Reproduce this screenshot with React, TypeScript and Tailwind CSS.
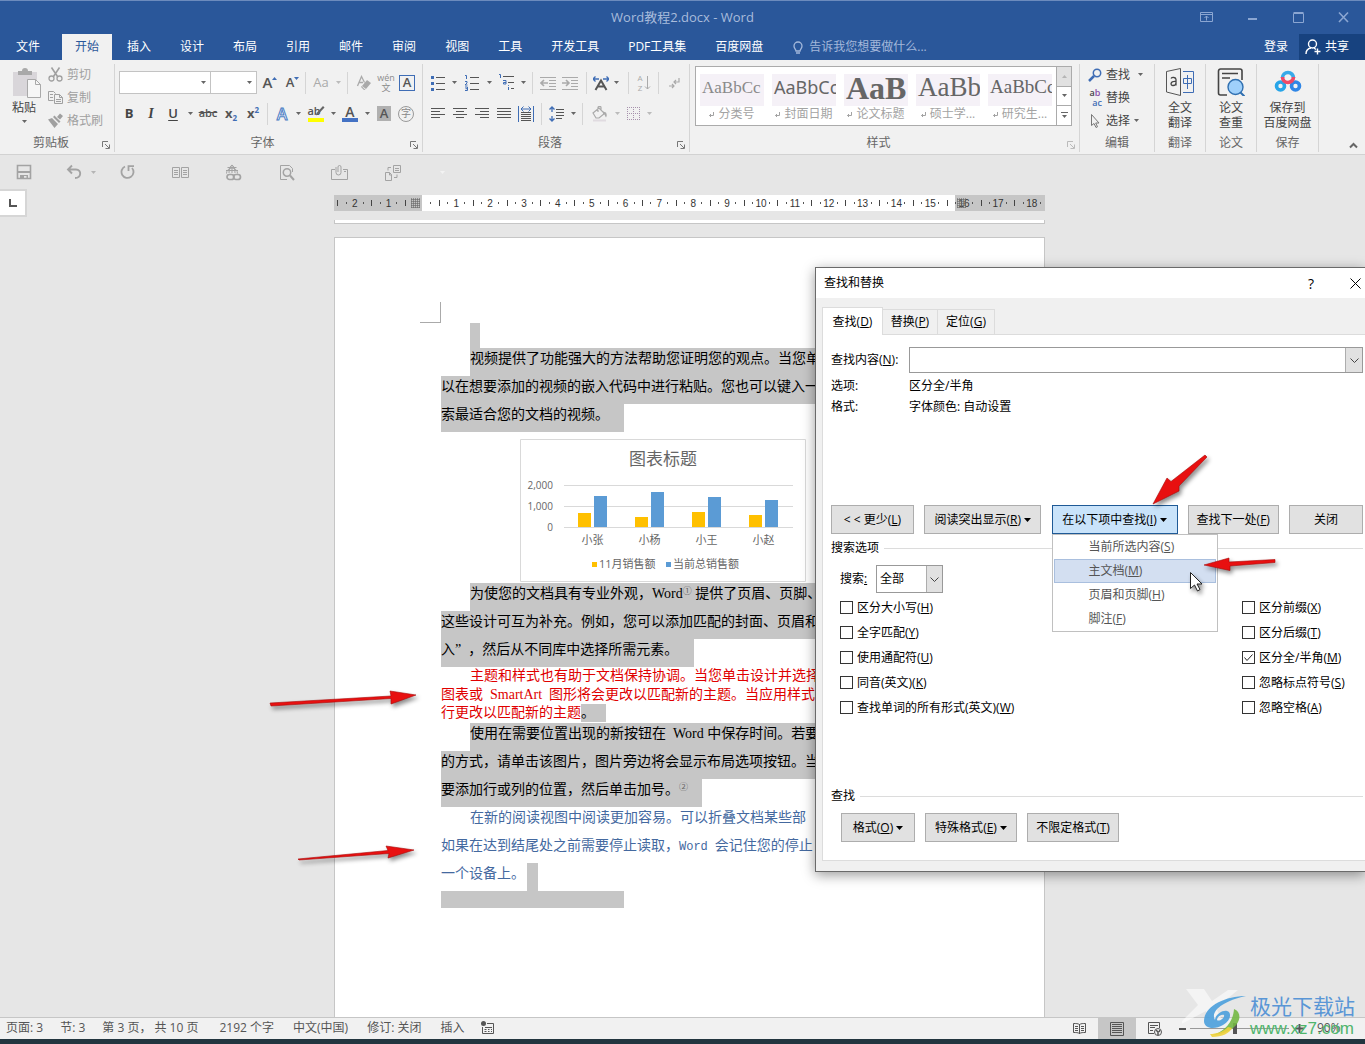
import type { ReactNode } from "react";

const tabs = ["插入", "设计", "布局", "引用", "邮件", "审阅", "视图", "工具", "开发工具", "PDF工具集", "百度网盘"];

const styles = [
  { name: "分类号", sample: "AaBbCc", look: "font-['Liberation_Serif',serif] text-[17px] text-[#8a8a8a]" },
  { name: "封面日期", sample: "AaBbCc", look: "font-['Noto_Sans',sans-serif] text-[18px] text-[#666]" },
  { name: "论文标题", sample: "AaB", look: "font-['Liberation_Serif',serif] text-[32px] font-bold text-[#666]" },
  { name: "硕士学...", sample: "AaBb", look: "font-['Liberation_Serif',serif] text-[27px] text-[#666]" },
  { name: "研究生...", sample: "AaBbCc", look: "font-['Liberation_Serif',serif] text-[19px] text-[#666]" },
];

const rulerMarks = Array.from({ length: 21 }, (_, i) => i - 2);

const chartData = [
  { name: "小张", month: 14, total: 31 },
  { name: "小杨", month: 10, total: 35 },
  { name: "小王", month: 15, total: 30 },
  { name: "小赵", month: 12, total: 27 },
];

const leftOptions = [
  { label: "区分大小写", hotkey: "H" },
  { label: "全字匹配", hotkey: "Y" },
  { label: "使用通配符", hotkey: "U" },
  { label: "同音(英文)", hotkey: "K" },
  { label: "查找单词的所有形式(英文)", hotkey: "W" },
];

const rightOptions = [
  { label: "区分前缀", hotkey: "X" },
  { label: "区分后缀", hotkey: "T" },
  { label: "区分全/半角", hotkey: "M", checked: true },
  { label: "忽略标点符号", hotkey: "S" },
  { label: "忽略空格", hotkey: "A" },
];

const scopeItems = [
  { label: "当前所选内容", hotkey: "S" },
  { label: "主文档", hotkey: "M", active: true },
  { label: "页眉和页脚", hotkey: "H" },
  { label: "脚注", hotkey: "F" },
];

/* ---------- small shared parts ---------- */

function Icon({ size = 16, className = "", children }: { size?: number; className?: string; children: ReactNode }) {
  return (
    <svg width={size} height={size} viewBox={`0 0 ${size} ${size}`} fill="none" stroke="currentColor" className={`shrink-0 ${className}`} aria-hidden="true">
      {children}
    </svg>
  );
}

function Caret({ className = "text-[#666]" }: { className?: string }) {
  return (
    <svg width="5" height="3" viewBox="0 0 5 3" className={`shrink-0 ${className}`} aria-hidden="true">
      <path d="M0 0h5L2.5 3z" fill="currentColor" />
    </svg>
  );
}

function Tool({ w, label, className = "text-[#555]", children }: { w: string; label: string; className?: string; children: ReactNode }) {
  return (
    <button aria-label={label} className={`flex h-full shrink-0 items-center justify-center ${w} ${className}`}>
      {children}
    </button>
  );
}

function Sep({ w }: { w: string }) {
  return (
    <span className={`flex shrink-0 justify-center ${w}`}>
      <span className="h-[22px] w-px bg-[#d5d5d5]" />
    </span>
  );
}

function Key({ k }: { k: string }) {
  return (
    <>
      (<u className="underline-offset-1">{k}</u>)
    </>
  );
}

function Group({ label, w, launcher, dim, children }: { label: string; w: string; launcher?: boolean; dim?: boolean; children: ReactNode }) {
  return (
    <section className={`flex h-[88px] flex-col border-r border-[#d5d5d5] ${w}`}>
      <div className="h-[70px]">{children}</div>
      <div className="flex h-[18px] items-center text-[#666]">
        <span className="flex-1 text-center">{label}</span>
        {launcher ? (
          <button aria-label={`${label}设置`} className={`flex w-3 items-end pt-1 ${dim ? "text-[#bbb]" : "text-[#777]"}`}>
            <Icon size={8}>
              <path d="M.5 6V.5H6M3 3l4 4M7.5 3.5v4h-4" />
            </Icon>
          </button>
        ) : null}
      </div>
    </section>
  );
}

/* ---------- title bar and tabs ---------- */

function TitleBar() {
  return (
    <header className="h-[60px] shrink-0 border-t border-[#6c8bbd] bg-[#2a579a] text-white">
      <div className="grid h-[33px] grid-cols-[1fr_auto_1fr] items-center text-[#a9bcdc]">
        <span />
        <h1 className="text-[13px]">Word教程2.docx - Word</h1>
        <div className="flex justify-end text-[#8ba6d2]">
          <button aria-label="功能区显示选项" className="flex w-[46px] justify-center">
            <Icon size={13}>
              <path d="M.5 1.5h12v9H.5zM.5 3.500h12M6.500 9.500V5M4.500 7l2-2 2 2" />
            </Icon>
          </button>
          <button aria-label="最小化" className="flex w-[46px] justify-center">
            <Icon size={13}>
              <path d="M2 8h9" strokeWidth="2" />
            </Icon>
          </button>
          <button aria-label="最大化" className="flex w-[46px] justify-center">
            <Icon size={13}>
              <path d="M1.500 2.500h10v9h-10zM1.500 1.500h10" />
            </Icon>
          </button>
          <button aria-label="关闭窗口" className="flex w-11 justify-center">
            <Icon size={13}>
              <path d="M2 1.500l9 9.500M11 1.500l-9 9.500" strokeWidth="1.600" />
            </Icon>
          </button>
        </div>
      </div>
      <nav className="flex h-[26px] items-stretch gap-px whitespace-nowrap">
        <button className="mr-[5px] px-4">文件</button>
        <button className="bg-[#f1f1f1] px-[13px] text-[#2a579a]">开始</button>
        {tabs.map((tab) => (
          <button key={tab} className="px-[14px]">
            {tab}
          </button>
        ))}
        <button className="ml-[14px] flex items-center gap-[5px] text-[#a3b8db]">
          <Icon size={12} className="h-[15px]">
            <path d="M4 9.500C4 8 2 7 2 4.500a4 4 0 018 0C10 7 8 8 8 9.500zM4 11.500h4" strokeWidth="1.300" />
          </Icon>
          告诉我您想要做什么...
        </button>
        <button className="ml-auto px-[10px]">登录</button>
        <button className="flex w-[66px] items-center gap-1 bg-[#17427f] pl-[6px]">
          <Icon size={16}>
            <circle cx="7.500" cy="5" r="4" strokeWidth="1.400" />
            <path d="M1 15c0-3 2-5.500 5-6M9 9l2 1.500M12.500 9.500v6M9.500 12.500h6" strokeWidth="1.400" />
          </Icon>
          共享
        </button>
      </nav>
    </header>
  );
}

/* ---------- ribbon ---------- */

function ClipboardGroup() {
  return (
    <Group label="剪贴板" w="w-[115px]" launcher>
      <div className="flex">
        <button className="flex w-12 flex-col items-center pt-1 text-[#444]">
          <svg width="30" height="32" viewBox="0 0 30 32" className="ml-1" aria-hidden="true">
            <path d="M2 4h24v24H2z" fill="#d9d6da" />
            <path d="M7 7V3h4a3 3 0 016 0h4v4z" fill="#a9a9a9" />
            <path d="M16.500 11.500h8l5 5v13h-13z" fill="#f6f6f6" stroke="#a9a9a9" />
            <path d="M24.500 11.500v5h5" fill="none" stroke="#a9a9a9" />
          </svg>
          <span className="leading-4">粘贴</span>
          <Caret className="mt-1 text-[#666]" />
        </button>
        <div className="-mt-px flex flex-col text-[#a0a0a0]">
          <button className="flex h-[23px] items-center gap-1">
            <Icon size={15}>
              <path d="M3.500 0.500l6 9M11.500 0.500l-6 9" strokeWidth="1.600" />
              <circle cx="3.500" cy="11.500" r="2.500" strokeWidth="1.300" />
              <circle cx="11.500" cy="11.500" r="2.500" strokeWidth="1.300" />
            </Icon>
            剪切
          </button>
          <button className="flex h-[23px] items-center gap-1">
            <Icon size={15}>
              <path d="M5.500 10.500h-5v-9h5l2 2M6.500 4.500h5l3 3v6h-8zM11.500 4.500v3h3M2 4.500h3M2 7.500h3M8 9.500h5M8 11.500h5" />
            </Icon>
            复制
          </button>
          <button className="flex h-[23px] items-center gap-1">
            <Icon size={15}>
              <path d="M9 4l3-3.500 3 2.500-3 3.500zM6.500 2.500l6 6-1.500 1.500-6-6zM0 6.500l4-1.500 6 6-3.500 4z" fill="currentColor" stroke="none" />
            </Icon>
            格式刷
          </button>
        </div>
      </div>
    </Group>
  );
}

function FontGroup() {
  return (
    <Group label="字体" w="w-[308px]" launcher>
      <div className="flex h-[30px] items-center pt-[7px] pl-1">
        {[
          { label: "字体名称", w: "w-[92px]" },
          { label: "字号", w: "-ml-px w-[47px]" },
        ].map((box) => (
          <div key={box.label} className={`relative h-[23px] shrink-0 border border-[#c3c3c3] bg-white ${box.w}`}>
            <select aria-label={box.label} className="h-full w-full appearance-none" />
            <Caret className="pointer-events-none absolute top-[9px] right-1 text-[#666]" />
          </div>
        ))}
        <Tool w="w-[26px]" label="增大字号">
          <span className="text-[15px] font-semibold">A</span>
          <Caret className="mb-2 rotate-180 text-[#3f6db5]" />
        </Tool>
        <Tool w="w-[19px]" label="减小字号">
          <span className="text-[13px] font-semibold">A</span>
          <Caret className="mb-2 text-[#3f6db5]" />
        </Tool>
        <Sep w="w-[6px]" />
        <Tool w="w-[26px]" label="更改大小写" className="text-[13px] text-[#aaa]">
          Aa
        </Tool>
        <Tool w="w-2" label="大小写菜单" className="text-[#bbb]">
          <Caret className="text-[#bbb]" />
        </Tool>
        <Sep w="w-[10px]" />
        <Tool w="w-6" label="清除格式" className="text-[#aaa]">
          <Icon>
            <path d="M1.500 11L5.500 1.500l3 6M3 7.500h4" strokeWidth="1.300" />
            <path d="M6 11l5-6 4 3-5 6zM5 12l3 3h1.500L5.500 11z" fill="currentColor" stroke="none" />
          </Icon>
        </Tool>
        <Tool w="w-5" label="拼音指南" className="flex-col text-[9px] leading-[10px] text-[#8c8c8c]">
          <span>wén</span>
          <span>文</span>
        </Tool>
        <Tool w="w-[22px]" label="字符边框">
          <span className="flex h-4 w-4 items-center justify-center border border-[#3f6db5] text-[13px] font-semibold">A</span>
        </Tool>
      </div>
      <div className="mt-2 flex h-[23px] items-center pl-[3px]">
        <Tool w="w-[22px]" label="加粗" className="text-[13px] font-bold text-[#444]">
          B
        </Tool>
        <Tool w="w-[22px]" label="倾斜" className="font-['Liberation_Serif',serif] text-[14px] font-bold text-[#444] italic">
          I
        </Tool>
        <Tool w="w-[22px]" label="下划线" className="text-[13px] font-semibold text-[#444] underline underline-offset-2">
          U
        </Tool>
        <Tool w="w-3" label="下划线菜单">
          <Caret />
        </Tool>
        <Tool w="w-6" label="删除线" className="text-[11px] font-semibold text-[#555] line-through">
          abc
        </Tool>
        <Tool w="w-[22px]" label="下标" className="text-[13px] font-bold text-[#555]">
          x<span className="mt-2 text-[8px] text-[#3f6db5]">2</span>
        </Tool>
        <Tool w="w-[22px]" label="上标" className="text-[13px] font-bold text-[#555]">
          x<span className="mb-2 text-[8px] text-[#3f6db5]">2</span>
        </Tool>
        <Sep w="w-[7px]" />
        <Tool w="w-[22px]" label="文本效果" className="text-[16px] font-semibold text-white [-webkit-text-stroke:1px_#4a7cc4]">
          A
        </Tool>
        <Tool w="w-[10px]" label="文本效果菜单">
          <Caret />
        </Tool>
        <Tool w="w-[26px]" label="突出显示" className="flex-col text-[11px] leading-[10px] font-semibold text-[#555]">
          <span className="relative pr-1">
            ab
            <Icon size={14} className="absolute -top-px left-1">
              <path d="M5 10.500l1-3L12 1l1.500 1.500-6 6.500z" fill="#666" stroke="none" />
            </Icon>
          </span>
          <span className="mt-[2px] h-1 w-4 bg-[#ff0]" />
        </Tool>
        <Tool w="w-2" label="突出显示菜单">
          <Caret />
        </Tool>
        <Tool w="w-[26px]" label="字体颜色" className="flex-col text-[14px] leading-[11px] font-semibold text-[#555]">
          <span>A</span>
          <span className="mt-px h-1 w-4 bg-[#4472c4]" />
        </Tool>
        <Tool w="w-2" label="字体颜色菜单">
          <Caret />
        </Tool>
        <Tool w="w-[26px]" label="字符底纹">
          <span className="flex h-[15px] w-[14px] items-center justify-center bg-[#b0b0b0] text-[13px] font-semibold">A</span>
        </Tool>
        <Tool w="w-[18px]" label="带圈字符" className="text-[#888]">
          <span className="flex h-4 w-4 items-center justify-center rounded-full border border-[#999] text-[10px]">字</span>
        </Tool>
      </div>
    </Group>
  );
}

function ParagraphGroup() {
  return (
    <Group label="段落" w="w-[267px]" launcher>
      <div className="flex h-[30px] items-center pt-[7px] pl-1">
        <Tool w="w-[22px]" label="项目符号">
          <Icon>
            <path d="M6 2.500h9M6 8.500h9M6 14.500h9" />
            <path d="M1 1h3v3H1zM1 7h3v3H1zM1 13h3v3H1z" fill="#3f6db5" stroke="none" />
          </Icon>
        </Tool>
        <Tool w="w-[10px]" label="项目符号菜单">
          <Caret />
        </Tool>
        <Tool w="w-[26px]" label="编号">
          <Icon>
            <path d="M6 2.500h9M6 8.500h9M6 14.500h9" />
            <path d="M1 .5h1.500V4M1 6.500h2v1.500l-2 2h2.500M1 12h2.500v3.500H1M1.500 13.700h2" stroke="#3f6db5" />
          </Icon>
        </Tool>
        <Tool w="w-2" label="编号菜单">
          <Caret />
        </Tool>
        <Tool w="w-[26px]" label="多级列表">
          <Icon size={17}>
            <path d="M5 2.500h11M10 8.500h6M13 14.500h3" />
            <path d="M1 .5h1.500V4M5 6.500h3v3.500H5.500V8.500H8M10.500 11v.8M10.500 13v3" stroke="#3f6db5" />
          </Icon>
        </Tool>
        <Tool w="w-2" label="多级列表菜单">
          <Caret />
        </Tool>
        <Sep w="w-[10px]" />
        <Tool w="w-[22px]" label="减少缩进" className="text-[#aaa]">
          <Icon>
            <path d="M0 2.500h16M9 5.500h7M9 8.500h7M9 11.500h7M0 14.500h16" />
            <path d="M1 8h7M4 5L1 8l3 3" strokeWidth="1.600" />
          </Icon>
        </Tool>
        <Tool w="w-[22px]" label="增加缩进" className="text-[#aaa]">
          <Icon>
            <path d="M0 2.500h16M9 5.500h7M9 8.500h7M9 11.500h7M0 14.500h16" />
            <path d="M0 8h7M4 5l3 3-3 3" strokeWidth="1.600" />
          </Icon>
        </Tool>
        <Sep w="w-[10px]" />
        <Tool w="w-5" label="中文版式">
          <Icon>
            <path d="M2.500 15L8 5.500l5.500 9.500M4.500 11.500h7" strokeWidth="2" />
            <path d="M0 4h6M2.500 1.500L0 4l2.500 2.500M10 4h6M13.500 1.500L16 4l-2.500 2.500" stroke="#3f6db5" strokeWidth="1.300" />
          </Icon>
        </Tool>
        <Tool w="w-[10px]" label="中文版式菜单">
          <Caret />
        </Tool>
        <Sep w="w-[14px]" />
        <Tool w="w-[18px]" label="排序" className="text-[#aaa]">
          <span className="flex flex-col text-[8px] leading-[10px]">
            <span>A</span>
            <span>Z</span>
          </span>
          <svg width="8" height="16" viewBox="0 0 8 16" fill="none" stroke="currentColor" aria-hidden="true">
            <path d="M4.500 1v13M2 11.500L4.500 14 7 11.500" />
          </svg>
        </Tool>
        <Sep w="w-[10px]" />
        <Tool w="w-[22px]" label="显示编辑标记" className="text-[#aaa]">
          <Icon size={12}>
            <path d="M11 1v4H6M8 3L6 5l2 2M1 9h5M4 7l2 2-2 2" strokeWidth="1.200" />
          </Icon>
        </Tool>
      </div>
      <div className="mt-2 flex h-[23px] items-center pl-1">
        <Tool w="w-[22px]" label="左对齐">
          <Icon size={14}>
            <path d="M0 1.500h14M0 4.500h9M0 7.500h14M0 10.500h9" />
          </Icon>
        </Tool>
        <Tool w="w-[22px]" label="居中">
          <Icon size={14}>
            <path d="M0 1.500h14M3 4.500h8M0 7.500h14M3 10.500h8" />
          </Icon>
        </Tool>
        <Tool w="w-[22px]" label="右对齐">
          <Icon size={14}>
            <path d="M0 1.500h14M5 4.500h9M0 7.500h14M5 10.500h9" />
          </Icon>
        </Tool>
        <Tool w="w-[22px]" label="两端对齐">
          <Icon size={14}>
            <path d="M0 1.500h14M0 4.500h14M0 7.500h14M0 10.500h14" />
          </Icon>
        </Tool>
        <Tool w="w-[22px]" label="分散对齐">
          <Icon>
            <path d="M3 6.500h10M3 8.500h10M3 10.500h10M3 12.500h10M3 14.500h10" />
            <path d="M.5 0v16M15.500 0v16M3 3h10M5.500 .5L3 3l2.500 2.500M10.500 .5L13 3l-2.500 2.500" stroke="#3f6db5" />
          </Icon>
        </Tool>
        <Sep w="w-2" />
        <Tool w="w-6" label="行距">
          <Icon>
            <path d="M7 3.500h8M7 6.500h8M7 9.500h8M7 12.500h6" />
            <path d="M3 1v5M.5 3.500L3 1l2.500 2.500M3 10v5M.5 12.500L3 15l2.500-2.500" stroke="#3f6db5" strokeWidth="1.300" />
          </Icon>
        </Tool>
        <Tool w="w-2" label="行距菜单">
          <Caret />
        </Tool>
        <Sep w="w-[10px]" />
        <Tool w="w-[26px]" label="底纹" className="text-[#aaa]">
          <Icon>
            <path d="M1 7l6-5 5.500 5.500-5.500 4.500H4zM6 6V1.500C6 0 9 0 9 1.500V4" strokeWidth="1.200" />
            <path d="M11 5.500l3 1c1 2 1 3.500 0 5-1-1.500-1-3-3-4z" fill="currentColor" stroke="none" />
            <path d="M1 14.500h13" stroke="#e0dbe0" strokeWidth="2" />
          </Icon>
        </Tool>
        <Tool w="w-2" label="底纹菜单">
          <Caret className="text-[#bbb]" />
        </Tool>
        <Tool w="w-6" label="边框" className="text-[#a792ad]">
          <Icon size={13}>
            <path d="M0 .5h13M0 6.500h13M0 12.500h13M.5 0v13M6.500 0v13M12.500 0v13" strokeDasharray="1 1" />
          </Icon>
        </Tool>
        <Tool w="w-2" label="边框菜单">
          <Caret className="text-[#bbb]" />
        </Tool>
      </div>
    </Group>
  );
}

function StylesGroup() {
  return (
    <Group label="样式" w="min-w-0 flex-1" launcher dim>
      <div className="mt-[2px] mr-[7px] ml-[5px] flex h-[60px] border border-[#ababab] bg-white">
        <div className="flex flex-1 gap-2 overflow-hidden pt-1 pl-1">
          {styles.map((style) => (
            <button key={style.name} className="w-16 shrink-0">
              <span className={`flex h-8 items-center overflow-hidden bg-[#f5f1f7] px-[2px] pb-[5px] ${style.look}`}>{style.sample}</span>
              <span className="flex h-4 items-center justify-center gap-1 whitespace-nowrap text-[#a3a3a3]">
                <Icon size={5}>
                  <path d="M4.500 0v3.500H.5M2 2L.5 3.500 2 5" />
                </Icon>
                {style.name}
              </span>
            </button>
          ))}
        </div>
        <div className="grid w-[15px] grid-rows-3 border-l border-[#ababab]">
          <button aria-label="上一行" className="flex items-center justify-center bg-[#e1e1e1]">
            <Caret className="rotate-180 text-[#b5b5b5]" />
          </button>
          <button aria-label="下一行" className="flex items-center justify-center border-y border-[#ababab]">
            <Caret />
          </button>
          <button aria-label="更多样式" className="flex flex-col items-center justify-center gap-[2px]">
            <span className="h-px w-[7px] bg-[#666]" />
            <Caret />
          </button>
        </div>
      </div>
    </Group>
  );
}

function EditGroup() {
  return (
    <Group label="编辑" w="w-[75px]">
      <div className="-mt-px flex flex-col pl-2 text-[#444]">
        <button className="flex h-[23px] items-center gap-1">
          <Icon size={14}>
            <circle cx="9" cy="5" r="3.700" stroke="#3f6db5" strokeWidth="1.500" />
            <path d="M6 8l-5 5" stroke="#3f6db5" strokeWidth="2.500" />
          </Icon>
          查找
          <Caret className="ml-1 text-[#666]" />
        </button>
        <button className="flex h-[23px] items-center gap-1">
          <span className="flex w-[14px] flex-col text-[9px] leading-[10px] font-semibold">
            <span>
              a<span className="text-[#8a4fa8]">b</span>
            </span>
            <span className="self-end text-[#3f6db5]">ac</span>
          </span>
          替换
        </button>
        <button className="flex h-[23px] items-center gap-1">
          <Icon size={14}>
            <path d="M3.500 .5v11l2.500-2 2 4 1.500-.7-1.800-3.800h3.300z" stroke="#777" />
          </Icon>
          选择
          <Caret />
        </button>
      </div>
    </Group>
  );
}

function BigButton({ icon, lines }: { icon: ReactNode; lines: string[] }) {
  return (
    <button className="flex w-full flex-col items-center pt-1 leading-[15px] whitespace-nowrap text-[#444]">
      <span className="mb-1 h-7">{icon}</span>
      {lines.map((line) => (
        <span key={line}>{line}</span>
      ))}
    </button>
  );
}

function Ribbon() {
  return (
    <div className="flex h-[95px] shrink-0 border-b border-[#d2d2d2] bg-[#f1f1f1] pt-1">
      <ClipboardGroup />
      <FontGroup />
      <ParagraphGroup />
      <StylesGroup />
      <EditGroup />
      <Group label="翻译" w="w-[51px]">
        <BigButton
          lines={["全文", "翻译"]}
          icon={
            <Icon size={28}>
              <path d="M.5 3.500L14.500.5v27L.5 24z" stroke="#555" />
              <path d="M17 3.500h10.500v21H17" stroke="#3f6db5" />
              <path d="M5 10.500c1-1.500 5-1.500 5 1v6M10 13.500c-6-.5-6 4-3 4 1.500 0 3-1 3-2.500" stroke="#444" strokeWidth="1.300" />
              <path d="M17.500 10.500h8v5h-8zM21.500 7v14" stroke="#3f6db5" />
            </Icon>
          }
        />
      </Group>
      <Group label="论文" w="w-[51px]">
        <BigButton
          lines={["论文", "查重"]}
          icon={
            <Icon size={28}>
              <path d="M10 27H3.500a2 2 0 01-2-2V3a2 2 0 012-2H23a2 2 0 012 2v9" stroke="#444" strokeWidth="1.600" />
              <path d="M5 5.500h16M5 10h8" stroke="#444" strokeWidth="1.600" />
              <circle cx="18.500" cy="19" r="7.500" fill="#9fd0fb" stroke="#2f6fb0" strokeWidth="1.400" />
              <path d="M23.500 24.500l4 4" stroke="#2f6fb0" strokeWidth="2" />
            </Icon>
          }
        />
      </Group>
      <Group label="保存" w="w-[62px]">
        <BigButton
          lines={["保存到", "百度网盘"]}
          icon={
            <Icon size={28}>
              <circle cx="6.500" cy="18" r="4" stroke="#27a5e8" strokeWidth="3.600" />
              <circle cx="21.500" cy="18" r="4" stroke="#2f86e6" strokeWidth="3.600" />
              <path d="M8.500 10a5.500 5.500 0 0111 0" stroke="#38a9e8" strokeWidth="3.600" />
              <path d="M19.500 9a5.500 5.500 0 01-11 0" stroke="#ee4a67" strokeWidth="3.600" />
            </Icon>
          }
        />
      </Group>
      <button aria-label="折叠功能区" className="flex w-[46px] items-end justify-end pr-[7px] pb-1 text-[#666]">
        <Icon size={9}>
          <path d="M1 6.500L4.500 3 8 6.500" strokeWidth="2" />
        </Icon>
      </button>
    </div>
  );
}

/* ---------- quick access bar and ruler ---------- */

function QuickAccess() {
  return (
    <div className="flex h-[34px] shrink-0 items-center text-[#a3a3a3]">
      <Tool w="w-12" label="保存" className="">
        <Icon>
          <path d="M1.500 1.500h13v13h-13z" strokeWidth="1.600" />
          <path d="M1 7h14v2H1zM4 11h8v4h-1.500v-3H8v3H4z" fill="currentColor" stroke="none" />
        </Icon>
      </Tool>
      <Tool w="ml-[11px] w-[30px]" label="撤消" className="">
        <Icon>
          <path d="M2 5.500h8c6 0 5.500 8.500-1 8.500M6 1.500l-4 4 4 4" strokeWidth="1.900" />
        </Icon>
      </Tool>
      <Tool w="mr-1 w-2" label="撤消列表" className="">
        <Caret className="text-[#b5b5b5]" />
      </Tool>
      <Tool w="w-[53px]" label="重复" className="">
        <Icon>
          <path d="M5 2.500a6 6 0 107 1.500M8.500 7V2.200H14" strokeWidth="1.800" />
        </Icon>
      </Tool>
      <Tool w="w-[53px]" label="双页" className="">
        <Icon size={17}>
          <path d="M.5 3.500h7v10h-7zM9.500 3.500h7v10h-7zM2 6.500h4M2 8.500h4M2 10.500h4M11 6.500h4M11 8.500h4M11 10.500h4" />
        </Icon>
      </Tool>
      <Tool w="w-[53px]" label="超链接" className="">
        <Icon size={17}>
          <path d="M1.500 9.500a5.500 5.500 0 0111 0M1 6.500h12M7 1v8M4 9c0-4 1-7 3-8 2 1 3 4 3 8M2.500 3.500h9" />
          <rect x="2" y="10.500" width="7" height="5" rx="2.500" strokeWidth="1.700" />
          <rect x="8.500" y="10.500" width="7" height="5" rx="2.500" strokeWidth="1.700" />
        </Icon>
      </Tool>
      <Tool w="w-[53px]" label="打印预览" className="">
        <Icon size={17}>
          <path d="M14.500 8V4.500l-3-3h-9v14H9" />
          <circle cx="9" cy="8.500" r="3.700" strokeWidth="1.500" />
          <path d="M12 11.500l4 4.500" strokeWidth="2" />
        </Icon>
      </Tool>
      <Tool w="w-[53px]" label="邮件附件" className="">
        <Icon size={17}>
          <path d="M4 5.500H.5v10h16v-10H12M13 7.500h2M5 3v5.500a2.500 2.500 0 005 0V3a1.500 1.500 0 00-3 0v5" />
        </Icon>
      </Tool>
      <Tool w="w-[53px]" label="导航" className="">
        <Icon size={17}>
          <path d="M1.500 8.500h4l2 2v6h-6zM5.500 8.500v2.500h2M9.500 1.500h7v7h-7zM11 4.500h4M11 6.500h4M7 3.500H4v3M10 13.500h3v-3" />
        </Icon>
      </Tool>
      <Caret className="ml-[21px] text-[#f3f3f3]" />
    </div>
  );
}

function Ruler() {
  return (
    <div className="grid h-7 shrink-0 grid-cols-[27px_1fr_14px]">
      <button aria-label="制表符" className="flex h-7 w-[27px] items-center justify-center border-2 border-l-0 border-[#d6d6d6] bg-white text-[#555]">
        <Icon size={8}>
          <path d="M1 0v7h7" strokeWidth="2" />
        </Icon>
      </button>
      <div className="relative mx-auto mt-[6px] flex h-4 w-[711px] bg-[linear-gradient(to_right,#c6c6c6_88px,#fff_88px,#fff_621px,#c6c6c6_621px)] font-['Liberation_Sans',sans-serif] text-[10px] text-[#333]">
        {rulerMarks.map((n) => (
          <div key={n} className="grid flex-1 grid-cols-4 items-center justify-items-center">
            <span className="h-[6px] w-px bg-[#444]" />
            {n === 0 ? <span /> : <span className="h-[2px] w-px bg-[#555]" />}
            <span className="flex w-0 justify-center">{n === 0 ? "" : Math.abs(n)}</span>
            <span className="h-[2px] w-px bg-[#555]" />
          </div>
        ))}
        <span className="absolute top-[3px] left-[77px] h-[10px] w-[9px] bg-[repeating-linear-gradient(0deg,#6669_0_1px,transparent_1px_2px),repeating-linear-gradient(90deg,#6669_0_1px,transparent_1px_2px)]" />
        <span className="absolute top-[3px] left-[623px] h-[10px] w-[9px] bg-[repeating-linear-gradient(0deg,#6669_0_1px,transparent_1px_2px),repeating-linear-gradient(90deg,#6669_0_1px,transparent_1px_2px)]" />
      </div>
    </div>
  );
}

/* ---------- document ---------- */

function SalesChart() {
  return (
    <svg width="286" height="143" viewBox="0 0 286 143" className="mt-[7px] mb-px ml-[79px] block fill-[#666] font-['Open_Sans','Noto_Sans_CJK_SC',sans-serif]" role="img" aria-label="图表标题">
      <path d="M.5 .5h285v142H.5z" fill="#fff" stroke="#d9d9d9" />
      <text x="143" y="26" textAnchor="middle" className="text-[17px]">
        图表标题
      </text>
      <path d="M44 46.500h229M44 67.500h229M44 88.500h229" stroke="#d9d9d9" />
      {["2,000", "1,000", "0"].map((tick, i) => (
        <text key={tick} x="33" y={50 + i * 21} textAnchor="end" className="text-[10px]">
          {tick}
        </text>
      ))}
      {chartData.map((d, i) => (
        <g key={d.name}>
          <rect x={58 + i * 57} y={88 - d.month} width="13" height={d.month} fill="#ffc000" />
          <rect x={74 + i * 57} y={88 - d.total} width="13" height={d.total} fill="#5b9bd5" />
          <text x={72.5 + i * 57} y="105" textAnchor="middle" className="text-[11px]">
            {d.name}
          </text>
        </g>
      ))}
      <rect x="72" y="123" width="5" height="5" fill="#ffc000" />
      <text x="79" y="129" className="text-[11px]">
        11月销售额
      </text>
      <rect x="146" y="123" width="5" height="5" fill="#5b9bd5" />
      <text x="153" y="129" className="text-[11px]">
        当前总销售额
      </text>
    </svg>
  );
}

function Line({ className = "", children }: { className?: string; children?: ReactNode }) {
  return <p className={`h-7 overflow-hidden leading-[22px] whitespace-nowrap ${className}`}>{children}</p>;
}

function DocumentPage() {
  return (
    <article className="mx-auto h-full w-[711px] border border-b-0 border-[#c6c6c6] bg-white pt-16 pr-[106px] pl-[106px] font-['Liberation_Serif','Noto_Sans_CJK_SC',serif] text-[14px] text-black">
      <div className="-ml-[21px] h-[21px] w-[21px] border-r border-b border-[#aaa]" />
      <div className="ml-[29px] h-[25px] w-[10px] bg-[#c6c6c6]" />
      <Line className="ml-[29px] bg-[#c6c6c6]">视频提供了功能强大的方法帮助您证明您的观点。当您单</Line>
      <Line className="bg-[#c6c6c6]">以在想要添加的视频的嵌入代码中进行粘贴。您也可以键入一</Line>
      <Line className="w-[183px] bg-[#c6c6c6]">索最适合您的文档的视频。</Line>
      <SalesChart />
      <Line className="ml-[29px] bg-[#c6c6c6]">
        为使您的文档具有专业外观，Word<sup className="text-[9px] text-[#666]">①</sup> 提供了页眉、页脚、
      </Line>
      <Line className="bg-[#c6c6c6]">这些设计可互为补充。例如，您可以添加匹配的封面、页眉和</Line>
      <Line className="w-[253px] bg-[#c6c6c6]">入”&ensp;，然后从不同库中选择所需元素。</Line>
      <div className="pb-px leading-[18px] whitespace-nowrap text-[#e00000]">
        <p className="ml-[29px]">主题和样式也有助于文档保持协调。当您单击设计并选择</p>
        <p className="leading-[19px]">
          图表或&ensp;SmartArt&ensp;图形将会更改以匹配新的主题。当应用样式
        </p>
        <p className="flex">
          行更改以匹配新的主题<span className="w-[25px] bg-[#c6c6c6] text-black">。</span>
        </p>
      </div>
      <Line className="ml-[29px] bg-[#c6c6c6]">使用在需要位置出现的新按钮在&ensp;Word 中保存时间。若要</Line>
      <Line className="bg-[#c6c6c6]">的方式，请单击该图片，图片旁边将会显示布局选项按钮。当</Line>
      <Line className="w-[261px] bg-[#c6c6c6]">
        要添加行或列的位置，然后单击加号。<sup className="text-[9px] text-[#666]">②</sup>
      </Line>
      <div className="text-[#44699f]">
        <Line className="ml-[29px]">在新的阅读视图中阅读更加容易。可以折叠文档某些部</Line>
        <Line>
          如果在达到结尾处之前需要停止读取，<span className="font-['Liberation_Mono',monospace] text-[12px]">Word</span>&ensp;会记住您的停止
        </Line>
        <Line className="flex">
          一个设备上。
          <span className="ml-[2px] h-7 w-[11px] bg-[#c6c6c6]" />
        </Line>
      </div>
      <div className="h-[17px] w-[183px] bg-[#c6c6c6]" />
    </article>
  );
}

/* ---------- find and replace ---------- */

function DialogButton({ w, active, menu, children }: { w: string; active?: boolean; menu?: boolean; children: ReactNode }) {
  return (
    <button
      className={`flex h-[29px] items-center justify-center gap-[3px] border whitespace-nowrap ${w} ${
        active ? "border-[#1f5a96] bg-[#c9e3fa]" : "border-[#adadad] bg-[#e1e1e1]"
      }`}
    >
      <span>{children}</span>
      {menu ? (
        <svg width="7" height="4" viewBox="0 0 7 4" aria-hidden="true">
          <path d="M0 0h7L3.500 4z" />
        </svg>
      ) : null}
    </button>
  );
}

function CheckRow({ label, hotkey, checked }: { label: string; hotkey: string; checked?: boolean }) {
  return (
    <label className="flex h-[25px] items-center gap-1 whitespace-nowrap">
      <span className="relative h-[13px] w-[13px]">
        <input type="checkbox" defaultChecked={checked} className="peer block h-[13px] w-[13px] appearance-none border border-[#333] bg-white" />
        <Icon size={13} className="pointer-events-none absolute inset-0 hidden peer-checked:block">
          <path d="M2.500 6.500L5 9.500l5.500-6" stroke="#222" />
        </Icon>
      </span>
      <span>
        {label}
        <Key k={hotkey} />
      </span>
    </label>
  );
}

function SectionHead({ className, children }: { className: string; children: ReactNode }) {
  return (
    <div className={`flex h-5 items-center gap-[5px] ${className}`}>
      {children}
      <span className="h-px flex-1 bg-[#dcdcdc]" />
    </div>
  );
}

function Chevron() {
  return (
    <Icon size={9}>
      <path d="M.5 2.500l4 4 4-4" stroke="#444" />
    </Icon>
  );
}

function FindDialog() {
  return (
    <div role="dialog" aria-label="查找和替换" className="absolute top-[267px] right-0 left-[815px] border border-r-0 border-[#6a6a6a] bg-[#f0f0f0] pb-[10px] text-black shadow-[0_3px_12px_rgba(0,0,0,0.4)]">
      <div className="flex h-[30px] items-center bg-white pl-2">
        <h2 className="flex-1">查找和替换</h2>
        <button aria-label="帮助" className="w-11 text-[14px]">
          ?
        </button>
        <button aria-label="关闭" className="flex w-8 justify-end pr-1">
          <Icon size={11}>
            <path d="M.5 .5l10 10M10.500 .5l-10 10" stroke="#000" />
          </Icon>
        </button>
      </div>
      <div className="flex items-end pt-[9px] pl-[6px]" role="tablist">
        <button role="tab" aria-selected="true" className="relative z-10 -mb-px h-[28px] w-[61px] border border-b-0 border-[#dcdcdc] bg-white">
          查找
          <Key k="D" />
        </button>
        <button role="tab" className="h-[25px] w-[55px] border-t border-r border-[#dcdcdc]">
          替换
          <Key k="P" />
        </button>
        <button role="tab" className="h-[25px] w-[57px] border-t border-r border-[#dcdcdc]">
          定位
          <Key k="G" />
        </button>
      </div>
      <div className="ml-[6px] border border-r-0 border-[#dcdcdc] bg-white pt-3 pr-[2px] pb-[18px] pl-2">
        <div className="flex h-[26px] items-center">
          <label htmlFor="find-text" className="w-[78px] whitespace-nowrap">
            查找内容
            <Key k="N" />:
          </label>
          <div className="flex h-full flex-1 border border-[#999]">
            <input id="find-text" className="min-w-0 flex-1 px-1 outline-none" />
            <button aria-label="查找记录" className="flex w-[17px] items-center justify-center border-l border-[#adadad] bg-[#e1e1e1]">
              <Chevron />
            </button>
          </div>
        </div>
        <dl className="mt-[2px] grid grid-cols-[78px_1fr] leading-[21px]">
          <dt>选项:</dt>
          <dd>区分全/半角</dd>
          <dt>格式:</dt>
          <dd>字体颜色: 自动设置</dd>
        </dl>
        <div className="mt-[88px] flex justify-between">
          <DialogButton w="w-[83px]">
            &lt; &lt; 更少
            <Key k="L" />
          </DialogButton>
          <DialogButton w="w-[117px]" menu>
            阅读突出显示
            <Key k="R" />
          </DialogButton>
          <div className="relative">
            <DialogButton w="w-[126px]" active menu>
              在以下项中查找
              <Key k="I" />
            </DialogButton>
            <ul role="menu" className="absolute top-[29px] left-0 z-20 w-[166px] border border-[#c0c0c0] bg-white px-px text-[#555]">
              {scopeItems.map((item) => (
                <li key={item.label}>
                  <button role="menuitem" className={`block h-6 w-full border pl-[34px] text-left ${item.active ? "border-[#a9bfde] bg-[#d3dff1]" : "border-transparent"}`}>
                    {item.label}
                    <Key k={item.hotkey} />
                  </button>
                </li>
              ))}
            </ul>
          </div>
          <DialogButton w="w-[91px]">
            查找下一处
            <Key k="F" />
          </DialogButton>
          <DialogButton w="w-[74px]">关闭</DialogButton>
        </div>
        <SectionHead className="mt-1">搜索选项</SectionHead>
        <div className="mt-[7px] flex h-7 items-center pl-[9px]">
          <label htmlFor="scope" className="w-9">
            搜索<u>:</u>
          </label>
          <div className="relative h-full w-[67px]">
            <select id="scope" className="h-full w-full appearance-none border border-[#999] bg-white pl-[3px]">
              <option>全部</option>
            </select>
            <span className="pointer-events-none absolute inset-y-px right-px flex w-4 items-center justify-center border-l border-[#adadad] bg-[#e1e1e1]">
              <Chevron />
            </span>
          </div>
        </div>
        <div className="mt-[2px] flex justify-between pl-[9px]">
          <div>
            {leftOptions.map((o) => (
              <CheckRow key={o.label} {...o} />
            ))}
          </div>
          <div className="w-[121px]">
            {rightOptions.map((o) => (
              <CheckRow key={o.label} {...o} />
            ))}
          </div>
        </div>
        <SectionHead className="mt-[66px]">查找</SectionHead>
        <div className="mt-[7px] flex gap-[10px] pl-[10px]">
          <DialogButton w="w-[74px]" menu>
            格式
            <Key k="O" />
          </DialogButton>
          <DialogButton w="w-[92px]" menu>
            特殊格式
            <Key k="E" />
          </DialogButton>
          <DialogButton w="w-[92px]">
            不限定格式
            <Key k="T" />
          </DialogButton>
        </div>
      </div>
    </div>
  );
}

/* ---------- status bar ---------- */

function StatusBar() {
  return (
    <footer className="flex h-[22px] shrink-0 items-center border-t border-[#c6c6c6] bg-[#f1f1f1] pl-[6px] whitespace-nowrap text-[#555]">
      <div className="flex items-center gap-[17px] pb-[2px]">
        <span>页面: 3</span>
        <span>节: 3</span>
        <span>第 3 页， 共 10 页</span>
      </div>
      <div className="ml-[21px] flex items-center gap-[19px] pb-[2px]">
        <span>2192 个字</span>
        <span>中文(中国)</span>
        <span>修订: 关闭</span>
        <span>插入</span>
        <Icon size={13} className="-ml-[2px]">
          <path d="M6 2.500h6.500v10h-11V6M4 6.500h7M3.500 8.500h2M7 8.500h1.500M10 8.500h1M3.500 10.500h2M7 10.500h1.500M10 10.500h1" />
          <circle cx="2.500" cy="2.500" r="2.500" fill="currentColor" stroke="none" />
        </Icon>
      </div>
      <div className="ml-auto flex h-full items-center">
        <button aria-label="阅读视图" className="flex w-[38px] justify-center">
          <Icon size={13}>
            <path d="M6.500 2.500C5 1.500 3 1.500.5 1.500v9c2.500 0 4.500 0 6 1 1.500-1 3.500-1 6-1v-9c-2.500 0-4.500 0-6 1zM6.500 2v10M2 4.500h3M2 6.500h3M2 8.500h3M8 4.500h3M8 6.500h3M8 8.500h3" />
          </Icon>
        </button>
        <button aria-label="页面视图" className="flex h-full w-[38px] items-center justify-center bg-[#c6c6c6]">
          <Icon size={14}>
            <path d="M.5 .5h13v13H.5zM2 2.500h10M2 4.500h10M2 6.500h10M2 8.500h10M2 10.500h10" />
          </Icon>
        </button>
        <button aria-label="Web 版式视图" className="flex w-[38px] justify-center">
          <Icon size={14}>
            <path d="M6 11.500H.5V.5h11V6M2 3.500h8M2 5.500h5M2 8.500h3" />
            <circle cx="10" cy="10" r="3.500" />
            <path d="M8 8l2 2v3M12 8l-1 2" strokeWidth="1.500" />
          </Icon>
        </button>
        <button aria-label="缩小" className="flex w-4 justify-center">
          <span className="h-[2px] w-[7px] bg-[#555]" />
        </button>
        <input
          type="range"
          aria-label="显示比例"
          defaultValue={45}
          className="h-3 w-[99px] appearance-none bg-[linear-gradient(#999,#999)] bg-[length:100%_1px] bg-center bg-no-repeat [&::-webkit-slider-thumb]:h-[11px] [&::-webkit-slider-thumb]:w-1 [&::-webkit-slider-thumb]:appearance-none [&::-webkit-slider-thumb]:bg-[#555]"
        />
        <button aria-label="放大" className="flex w-5 justify-center">
          <Icon size={9}>
            <path d="M4.500 0v9M0 4.500h9" strokeWidth="2" />
          </Icon>
        </button>
        <span className="w-[56px] pb-[2px] pl-2">90%</span>
      </div>
    </footer>
  );
}

/* ---------- annotations drawn over the window ---------- */

function Annotations() {
  return (
    <svg className="pointer-events-none absolute top-0 left-0 z-30 drop-shadow-[2px_3px_2px_rgba(0,0,0,0.45)]" width="1365" height="1044" viewBox="0 0 1365 1044" aria-hidden="true">
      <g fill="#e81010" stroke="#a80808" strokeWidth=".6">
        <path d="M270 703l121-7-1-5 26 4-25 9 0-5.500-120 7.500z" />
        <path d="M298 859l90-8.500-2-4.500 28 4-26 8 1-4.500-90 6.500z" />
        <path d="M1205 455l2 2-28 29 0 5-26 13 14-26 4 3.500z" />
        <path d="M1275 559.500v3l-45 3.500 0 4.500-26-5.500 25-7 0 4z" />
      </g>
      <path d="M1190.500 572.500v16l4-3.500 3 6 2.500-1.500-3-5.500h5z" fill="#fff" stroke="#222" />
    </svg>
  );
}

function Watermark() {
  return (
    <div className="pointer-events-none absolute right-[10px] bottom-[5px] z-30 flex items-end">
      <svg width="68" height="50" viewBox="0 0 68 50" aria-hidden="true">
        <path d="M4 0h18l8 12L46 1h10L34 19l5 10H28l-4-7L-6 38l22-22z" fill="#fff" opacity=".55" />
        <path d="M64 7C42 7 22 18 22 32c0 8 11 9 19 4 8-4 9-13 4-14-5-1-12 4-12 9-5-9 8-19 31-24zM42 26c1 3-5 7-7 5 0-3 4-6 7-5z" fill="#4a9fdc" opacity=".9" />
        <path d="M52 20c11 4 6 24-22 26 12-3 21-12 22-26z" fill="#74b843" opacity=".9" />
        <path d="M46 38c-5 5-12 7-18 7l2 3c10 0 18-4 20-9z" fill="#f0d23c" opacity=".9" />
      </svg>
      <div className="w-[105px] whitespace-nowrap">
        <div className="text-[21px] leading-6 text-[#5a96d6]">极光下载站</div>
        <div className="font-['Liberation_Sans',sans-serif] text-[17px] leading-[21px] text-[#4fb56c]">www.xz7.com</div>
      </div>
    </div>
  );
}

export default function App() {
  return (
    <div className="relative flex h-screen flex-col overflow-hidden bg-[#e6e6e6] font-['Open_Sans','Noto_Sans_CJK_SC',sans-serif] text-[12px]">
      <TitleBar />
      <Ribbon />
      <QuickAccess />
      <Ruler />
      <main className="flex min-h-0 flex-1 flex-col overflow-hidden pt-[3px] pl-[14px]">
        <div className="mx-auto mb-[13px] h-1 w-[711px] shrink-0 border border-t-0 border-[#c6c6c6] bg-white" />
        <div className="min-h-0 flex-1">
          <DocumentPage />
        </div>
      </main>
      <StatusBar />
      <div className="h-[5px] shrink-0 bg-[#22353f]" />
      <FindDialog />
      <Annotations />
      <Watermark />
    </div>
  );
}
